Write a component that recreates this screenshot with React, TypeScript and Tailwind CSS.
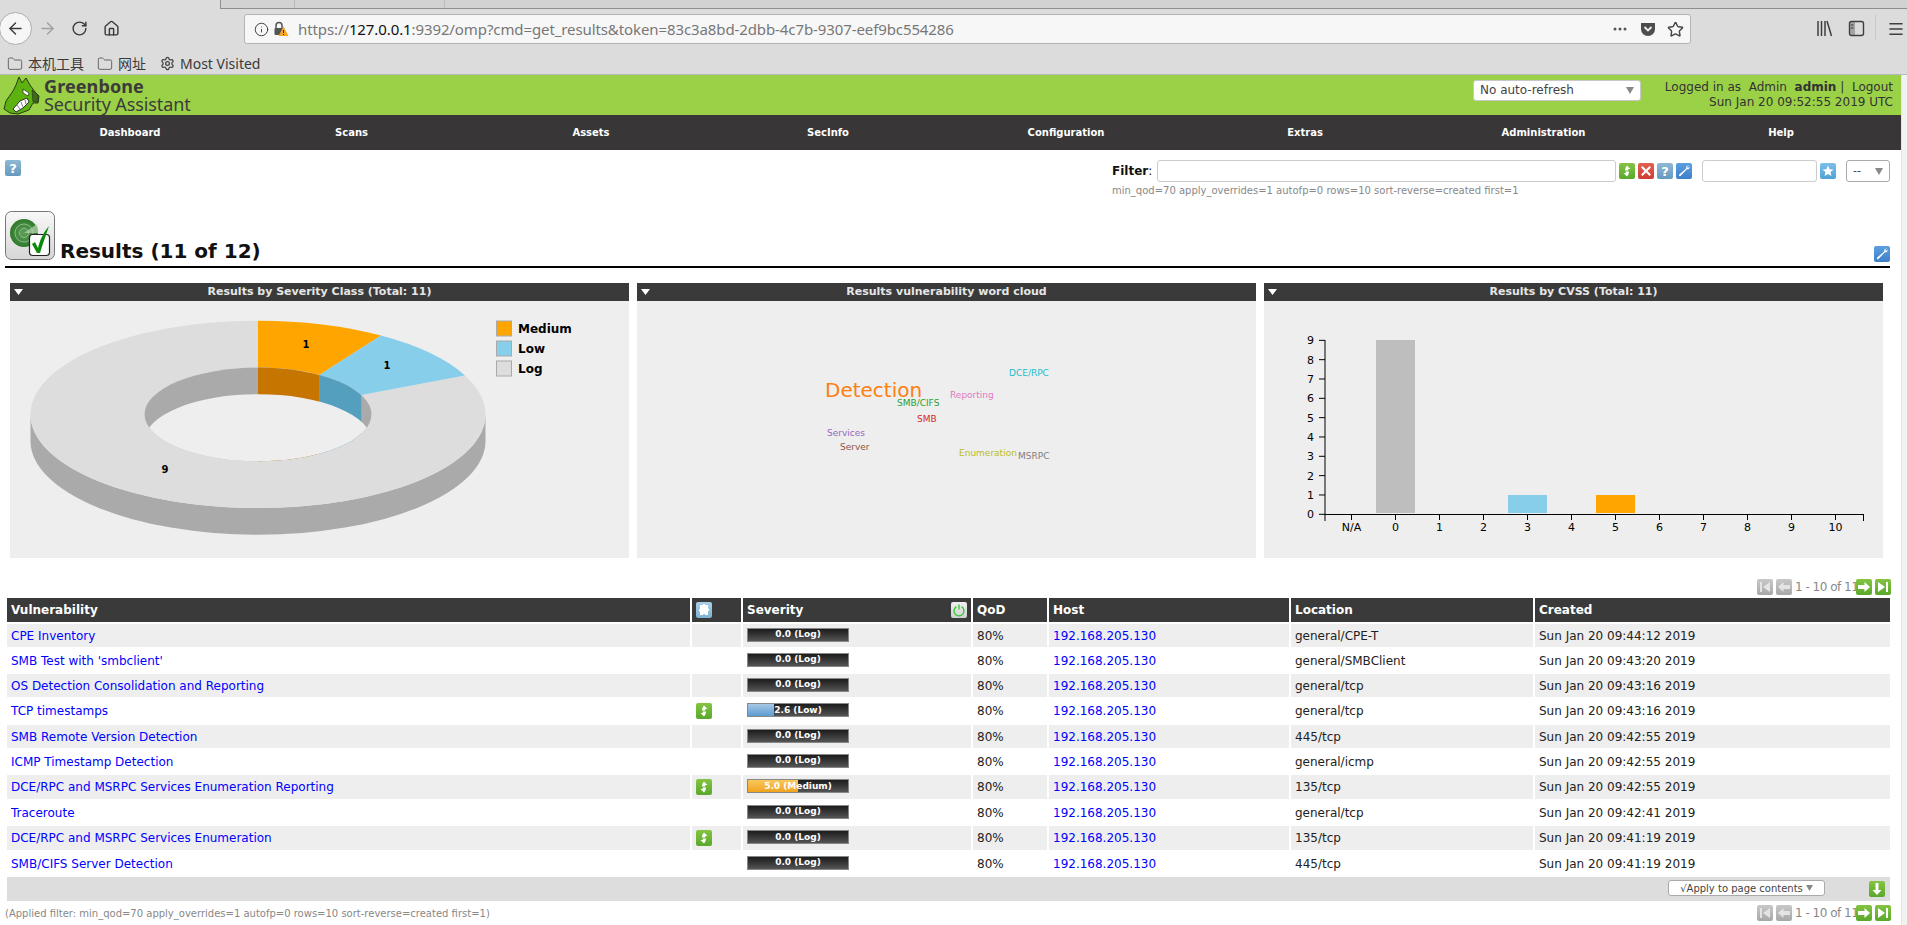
import React from "react";
import { ArrowLeft, ArrowRight, RotateCw, Home, Info, Star, Folder, Settings, Menu } from "lucide-react";

const rows = [
  { n: "CPE Inventory", o: false, s: "0.0 (Log)", f: 0, c: "", l: "general/CPE-T", d: "Sun Jan 20 09:44:12 2019" },
  { n: "SMB Test with 'smbclient'", o: false, s: "0.0 (Log)", f: 0, c: "", l: "general/SMBClient", d: "Sun Jan 20 09:43:20 2019" },
  { n: "OS Detection Consolidation and Reporting", o: false, s: "0.0 (Log)", f: 0, c: "", l: "general/tcp", d: "Sun Jan 20 09:43:16 2019" },
  { n: "TCP timestamps", o: true, s: "2.6 (Low)", f: 26, c: "low", l: "general/tcp", d: "Sun Jan 20 09:43:16 2019" },
  { n: "SMB Remote Version Detection", o: false, s: "0.0 (Log)", f: 0, c: "", l: "445/tcp", d: "Sun Jan 20 09:42:55 2019" },
  { n: "ICMP Timestamp Detection", o: false, s: "0.0 (Log)", f: 0, c: "", l: "general/icmp", d: "Sun Jan 20 09:42:55 2019" },
  { n: "DCE/RPC and MSRPC Services Enumeration Reporting", o: true, s: "5.0 (Medium)", f: 50, c: "med", l: "135/tcp", d: "Sun Jan 20 09:42:55 2019" },
  { n: "Traceroute", o: false, s: "0.0 (Log)", f: 0, c: "", l: "general/tcp", d: "Sun Jan 20 09:42:41 2019" },
  { n: "DCE/RPC and MSRPC Services Enumeration", o: true, s: "0.0 (Log)", f: 0, c: "", l: "135/tcp", d: "Sun Jan 20 09:41:19 2019" },
  { n: "SMB/CIFS Server Detection", o: false, s: "0.0 (Log)", f: 0, c: "", l: "445/tcp", d: "Sun Jan 20 09:41:19 2019" },
];

function Tile({ from, to, children, title }: { from: string; to: string; children?: React.ReactNode; title?: string }) {
  const id = "g" + from.replace("#", "") + to.replace("#", "");
  return (
    <svg width="16" height="16" viewBox="0 0 16 16" className="shrink-0 block">
      <defs>
        <linearGradient id={id} x1="0" y1="0" x2="0" y2="1">
          <stop offset="0" stopColor={from} />
          <stop offset="1" stopColor={to} />
        </linearGradient>
      </defs>
      <rect x="0" y="0" width="16" height="16" rx="2" fill={`url(#${id})`} />
      {children}
      {title ? null : null}
    </svg>
  );
}

const Refresh = () => (
  <Tile from="#84c441" to="#5aa82c">
    <path d="M8 2.5 L11.5 6 H9.3 V7.5 H6 C6 5.5 6.7 4.8 6.7 4.2 Z" fill="#fff" />
    <path d="M8 13.5 L4.5 10 H6.7 V8.5 H10 C10 10.5 9.3 11.2 9.3 11.8 Z" fill="#fff" />
  </Tile>
);
const Cross = () => (
  <Tile from="#e2604f" to="#cf3d33">
    <path d="M4.5 3 L8 6.5 L11.5 3 L13 4.5 L9.5 8 L13 11.5 L11.5 13 L8 9.5 L4.5 13 L3 11.5 L6.5 8 L3 4.5 Z" fill="#fff" />
  </Tile>
);
const Help = () => (
  <Tile from="#8fb9d2" to="#649ac0">
    <text x="8" y="13" textAnchor="middle" fontSize="13" fontWeight="700" fill="#fff">?</text>
  </Tile>
);
const Wrench = () => (
  <Tile from="#5c9fe0" to="#3d80c8">
    <path d="M13 2.5 C11 2.3 9.8 3.6 10.2 5.4 L3.2 11.6 C2.4 12.4 3.6 13.7 4.5 13 L10.9 6.2 C12.6 6.7 14 5.2 13.5 3.4 L12 5 L11 4 Z" fill="#fff" />
  </Tile>
);
const StarTile = () => (
  <Tile from="#7cc0ea" to="#4fa2d6">
    <path d="M8 2.5 L9.6 6.2 L13.5 6.5 L10.5 9.1 L11.5 13 L8 10.9 L4.5 13 L5.5 9.1 L2.5 6.5 L6.4 6.2 Z" fill="#fff" />
  </Tile>
);
const Puzzle = () => (
  <Tile from="#a9cfe6" to="#7fb2d3">
    <path d="M6 3 H7 C6.7 1.6 9.3 1.6 9 3 H12 V6.5 C13.6 6.2 13.6 9.2 12 8.9 V13 H9.2 C9.5 11.5 6.7 11.5 7 13 H4 V9.5 C2.4 9.9 2.4 6.6 4 7 V3 Z" fill="#fff" />
  </Tile>
);
const Power = () => (
  <Tile from="#f0f0f0" to="#d0d0d0">
    <path d="M5.4 4.6 A5 5 0 1 0 10.6 4.6" fill="none" stroke="#2fc52f" strokeWidth="1.3" />
    <path d="M8 2.5 V7.5" stroke="#2fc52f" strokeWidth="1.3" />
  </Tile>
);
const Down = () => (
  <Tile from="#84c441" to="#5aa82c">
    <path d="M6.5 2 H9.5 V9 H12.5 L8 14 L3.5 9 H6.5 Z" fill="#fff" />
  </Tile>
);

function Pager() {
  const gray: [string, string] = ["#c8c8c8", "#a8a8a8"];
  return (
    <div className="flex items-center gap-[3px] text-[12px] text-[#888888]">
      <Tile from={gray[0]} to={gray[1]}>
        <path d="M3 3 H5 V13 H3 Z M13 3 V13 L6 8 Z" fill="#e4e4e4" />
      </Tile>
      <Tile from={gray[0]} to={gray[1]}>
        <path d="M7.5 3 V6 H14 V10 H7.5 V13 L2 8 Z" fill="#e4e4e4" />
      </Tile>
      <span className="w-[58px] text-center tracking-[-0.5px] whitespace-nowrap">1 - 10 of 11</span>
      <Tile from="#84c441" to="#5aa82c">
        <path d="M8.5 3 V6 H2 V10 H8.5 V13 L14 8 Z" fill="#fff" />
      </Tile>
      <Tile from="#84c441" to="#5aa82c">
        <path d="M11 3 H13 V13 H11 Z M3 3 V13 L10 8 Z" fill="#fff" />
      </Tile>
    </div>
  );
}

function Panel({ title, children }: { title: string; children: React.ReactNode }) {
  return (
    <div className="w-[619px]">
      <div className="h-[18px] bg-[#3a3a3a] flex items-center relative">
        <svg width="9" height="6" viewBox="0 0 9 6" className="ml-[4px] shrink-0">
          <path d="M0 0 H9 L4.5 6 Z" fill="#fff" />
        </svg>
        <span className="flex-1 pr-[13px] text-center text-[11px] font-bold text-[#e6e6e6] whitespace-nowrap">{title}</span>
      </div>
      <div className="h-[257px] bg-[#eeeeee]">{children}</div>
    </div>
  );
}

function pt(rx: number, ry: number, deg: number) {
  const a = (deg * Math.PI) / 180;
  return [258 + rx * Math.sin(a), 414.4 - ry * Math.cos(a)];
}
function sector(a0: number, a1: number) {
  const R = 227.5, Y = 93.7, r = 113.5, y = 46.8;
  const [x0, y0] = pt(R, Y, a0), [x1, y1] = pt(R, Y, a1), [x2, y2] = pt(r, y, a1), [x3, y3] = pt(r, y, a0);
  const lg = a1 - a0 > 180 ? 1 : 0;
  return `M${x0} ${y0} A${R} ${Y} 0 ${lg} 1 ${x1} ${y1} L${x2} ${y2} A${r} ${y} 0 ${lg} 0 ${x3} ${y3} Z`;
}

function Donut() {
  const s = 360 / 11;
  return (
    <svg width="619" height="257" viewBox="10 301 619 257" className="block">
      <defs>
        <clipPath id="hole">
          <ellipse cx="258" cy="414.4" rx="113.5" ry="46.8" />
        </clipPath>
      </defs>
      <path d="M30.5 414.4 A227.5 93.7 0 0 0 485.5 414.4 V441 A227.5 93.7 0 0 1 30.5 441 Z" fill="#aaaaaa" />
      <path d={sector(2 * s, 359.999)} fill="#dddddd" />
      <path d={sector(0, s)} fill="#ffa500" />
      <path d={sector(s, 2 * s)} fill="#87ceeb" />
      <g clipPath="url(#hole)">
        <rect x="140" y="360" width="240" height="110" fill="#aaaaaa" />
        <rect x="258" y="360" width="61.4" height="110" fill="#c67500" />
        <rect x="319.4" y="360" width="41.8" height="110" fill="#559fbe" />
        <ellipse cx="258" cy="441" rx="113.5" ry="46.8" fill="#eeeeee" />
      </g>
      <g fontSize="10" fontWeight="700" fill="#000" textAnchor="middle">
        <text x="306" y="347.5">1</text>
        <text x="387" y="368.5">1</text>
        <text x="165" y="473">9</text>
      </g>
      <g stroke="#aaaaaa" strokeWidth="1">
        <rect x="496.5" y="321" width="15" height="15" fill="#ffa500" />
        <rect x="496.5" y="341" width="15" height="15" fill="#87ceeb" />
        <rect x="496.5" y="361" width="15" height="15" fill="#dddddd" />
      </g>
      <g fontSize="12" fontWeight="700" fill="#000">
        <text x="518" y="333">Medium</text>
        <text x="518" y="353">Low</text>
        <text x="518" y="373">Log</text>
      </g>
    </svg>
  );
}

const words: [string, number, number, number, string][] = [
  ["Detection", 825, 397, 20, "#ff7f0e"],
  ["SMB/CIFS", 897, 406, 9, "#2ca02c"],
  ["DCE/RPC", 1009, 376, 9, "#17becf"],
  ["Reporting", 950, 398, 9, "#e377c2"],
  ["SMB", 917, 422, 9, "#d62728"],
  ["Services", 827, 436, 9, "#9467bd"],
  ["Server", 840, 450, 9, "#8c564b"],
  ["Enumeration", 959, 456, 9, "#bcbd22"],
  ["MSRPC", 1018, 459, 9, "#7f7f7f"],
];

function Cloud() {
  return (
    <svg width="619" height="257" viewBox="637 301 619 257" className="block">
      {words.map(([t, x, y, s, c]) => (
        <text key={t} x={x} y={y} fontSize={s} fill={c}>{t}</text>
      ))}
    </svg>
  );
}

function Bars() {
  const ys = [0, 1, 2, 3, 4, 5, 6, 7, 8, 9];
  const xs = ["N/A", "0", "1", "2", "3", "4", "5", "6", "7", "8", "9", "10"];
  const y = (v: number) => 514.3 - v * 19.33;
  const x = (i: number) => 1351.5 + i * 44;
  return (
    <svg width="619" height="257" viewBox="1264 301 619 257" className="block">
      <rect x="1376" y="340" width="39" height="173" fill="#bebebe" />
      <rect x="1508" y="495" width="39" height="18" fill="#87ceeb" />
      <rect x="1596" y="495" width="39" height="18" fill="#ffa500" />
      <path d="M1325 340 V514.5 H1863.5" fill="none" stroke="#000" />
      <path d="M1325 514 V521 M1863.5 514 V521" stroke="#000" />
      {ys.map((v) => (
        <g key={v}>
          <path d={`M1319 ${y(v)} H1325`} stroke="#000" />
          <text x="1314" y={y(v) + 4} textAnchor="end" fontSize="11" fill="#000">{v}</text>
        </g>
      ))}
      {xs.map((t, i) => (
        <g key={t + i}>
          <path d={`M${x(i)} 514 V520`} stroke="#000" />
          <text x={x(i)} y="531" textAnchor="middle" fontSize="11" fill="#000">{t}</text>
        </g>
      ))}
    </svg>
  );
}

function Bar({ s, f, c }: { s: string; f: number; c: string }) {
  const fill = c === "low" ? "bg-linear-to-b from-[#a6c8e6] to-[#5c9bd1]" : "bg-linear-to-b from-[#f7c95a] to-[#f0a31a]";
  return (
    <div className="relative w-[102px] h-[14px] border border-[#888888] bg-linear-to-b from-[#1c1c1c] to-[#555555]">
      {f > 0 ? <div className={`h-full ${fill}`} style={{ width: `${f}%` }} /> : null}
      <div className="absolute inset-0 flex items-center justify-center text-[9px] font-bold text-white leading-none whitespace-nowrap">{s}</div>
    </div>
  );
}

function Dragon() {
  return (
    <svg width="38" height="40" viewBox="0 75 38 40" className="shrink-0 ml-[2px]">
      <path d="M17 77 L20 83 L24 78 L28 85 L33 92 L37 96 L36 103 L31 103 L27 110 L16 114 L8 113 L2 109 L4 101 L11 91 L14 85 Z" fill="#5cb30f" stroke="#2c3a18" strokeWidth="1" />
      <path d="M30 90 L36 95 L36 102 L31 102 Z" fill="#3e6b1a" stroke="#2c3a18" strokeWidth="0.7" />
      <path d="M21 89 L27 93 L26 96 L21 93 Z" fill="#fff" stroke="#222" strokeWidth="0.7" />
      <path d="M11 109 L18 101 L25 98 L27 102 L21 108 L14 112 Z" fill="#fff" stroke="#222" strokeWidth="0.9" />
      <path d="M15 105 L18 109 M19 102 L21 107 M23 100 L24 104" stroke="#444" strokeWidth="0.7" />
    </svg>
  );
}

function ResultsIcon() {
  return (
    <svg width="50" height="49" viewBox="0 0 50 49" className="shrink-0 block">
      <defs>
        <linearGradient id="box" x1="0" y1="0" x2="0" y2="1">
          <stop offset="0" stopColor="#f8f8f8" />
          <stop offset="1" stopColor="#d6d6d6" />
        </linearGradient>
        <radialGradient id="rad">
          <stop offset="0" stopColor="#5f9f5a" />
          <stop offset="1" stopColor="#2f7a2a" />
        </radialGradient>
      </defs>
      <rect x="0.5" y="0.5" width="49" height="48" rx="6" fill="url(#box)" stroke="#777777" />
      <circle cx="19" cy="22" r="14" fill="url(#rad)" />
      <circle cx="19" cy="22" r="9" fill="none" stroke="#9cc79a" strokeWidth="0.8" />
      <circle cx="19" cy="22" r="4.5" fill="none" stroke="#9cc79a" strokeWidth="0.8" />
      <path d="M19 22 L32 13 A14 14 0 0 1 33 22 Z" fill="#b8d4b0" opacity="0.7" />
      <rect x="24.5" y="23.5" width="20" height="21" rx="3" fill="#fff" stroke="#222" strokeWidth="1.2" />
      <path d="M27 33 L30 31 L33 37 C35 29 38 22 44 15 C41 24 38 32 35 42 H32 Z" fill="#0a8a0a" />
    </svg>
  );
}

function BrowserChrome() {
  return (
    <div className="h-[75px] bg-[#dcdcdc] border-b border-[#b8b8b8] [font-family:'Noto_Sans','Noto_Sans_CJK_SC',sans-serif] text-[#333]">
      <div className="h-[9px] flex">
        <div className="w-[220px] shrink-0" />
        <div className="flex-1 flex bg-[#d2d2d2] border-l border-b border-[#8e8e8e]">
          <div className="w-[74px] border-r border-[#bbbbbb]" />
          <div className="w-[150px] border-r border-[#bbbbbb]" />
        </div>
      </div>
      <div className="h-[44px] flex items-start">
        <div className="w-[33px] h-[33px] -ml-[1px] mt-[3px] rounded-full bg-[#f6f6f6] border border-[#adadad] flex items-center justify-center shrink-0">
          <ArrowLeft size={19} strokeWidth={1.8} color="#3a3a3a" />
        </div>
        <ArrowRight size={19} strokeWidth={1.8} color="#a0a0a0" className="ml-[6px] mt-[10px] shrink-0" />
        <RotateCw size={17} strokeWidth={2} color="#3a3a3a" className="ml-[14px] mt-[11px] shrink-0" />
        <Home size={17} strokeWidth={2} color="#3a3a3a" className="ml-[15px] mt-[11px] shrink-0" />
        <div className="ml-[124px] mt-[5px] w-[1447px] h-[30px] bg-[#f7f7f7] border border-[#b4b4b4] rounded-[3px] flex items-center shrink-0 text-[15px] leading-none">
          <Info size={15} strokeWidth={1.6} color="#444" className="ml-[9px] shrink-0" />
          <svg width="16" height="16" viewBox="0 0 16 16" className="ml-[4px] shrink-0">
            <path d="M3 7 V4.5 A3 3 0 0 1 9 4.5 V7" fill="none" stroke="#555" strokeWidth="1.5" />
            <rect x="1.5" y="7" width="9" height="7" rx="1" fill="#555" />
            <path d="M10.5 5.5 L15.5 15 H5.5 Z" fill="#f5a623" />
            <path d="M10.5 9 V12 M10.5 13 V14" stroke="#333" strokeWidth="1" />
          </svg>
          <span className="ml-[9px] whitespace-nowrap tracking-[-0.1px] text-[#777]">
            https://<span className="text-[#111]">127.0.0.1</span>:9392/omp?cmd=get_results&amp;token=83c3a8bd-2dbb-4c7b-9307-eef9bc554286
          </span>
          <div className="ml-auto flex items-center gap-[2px] pr-[6px]">
            <svg width="14" height="4" viewBox="0 0 14 4" className="mr-[11px]">
              <circle cx="2" cy="2" r="1.5" fill="#555" /><circle cx="7" cy="2" r="1.5" fill="#555" /><circle cx="12" cy="2" r="1.5" fill="#555" />
            </svg>
            <svg width="16" height="16" viewBox="0 0 16 16" className="mr-[9px]">
              <path d="M1 2 H15 V8 A7 7 0 0 1 1 8 Z" fill="#4d4d4d" />
              <path d="M4.5 6 L8 9.5 L11.5 6" fill="none" stroke="#f0f0f0" strokeWidth="1.8" />
            </svg>
            <Star size={17} strokeWidth={2} color="#444" />
          </div>
        </div>
        <svg width="17" height="17" viewBox="0 0 17 17" className="ml-[125px] mt-[11px] shrink-0">
          <path d="M2 1 V16 M5.5 1 V16 M9 1 V16 M11 1 L15.5 16" stroke="#3f3f3f" strokeWidth="1.5" fill="none" />
        </svg>
        <svg width="17" height="17" viewBox="0 0 17 17" className="ml-[15px] mt-[11px] shrink-0">
          <rect x="1.5" y="1.5" width="14" height="14" rx="2" fill="none" stroke="#3f3f3f" strokeWidth="1.4" />
          <rect x="1.5" y="1.5" width="5.5" height="14" fill="#3f3f3f" opacity="0.35" />
          <path d="M3 5 H5.5 M3 8 H5.5" stroke="#333" />
        </svg>
        <div className="ml-[10px] mt-[6px] w-px h-[25px] bg-[#c8c8c8] shrink-0" />
        <Menu size={18} strokeWidth={2.2} color="#3f3f3f" className="ml-[11px] mt-[11px] shrink-0" />
      </div>
      <div className="h-[21px] flex items-center text-[14px] leading-none text-[#3a3a3a]">
        <Folder size={16} strokeWidth={1.3} color="#555" className="ml-[7px] shrink-0" />
        <span className="ml-[5px]">本机工具</span>
        <Folder size={16} strokeWidth={1.3} color="#555" className="ml-[13px] shrink-0" />
        <span className="ml-[5px]">网址</span>
        <Settings size={15} strokeWidth={2} color="#444" className="ml-[14px] shrink-0" />
        <span className="ml-[5px]">Most Visited</span>
      </div>
    </div>
  );
}

const navItems: [string, string][] = [
  ["Dashboard", "w-[260px]"], ["Scans", "w-[183px]"], ["Assets", "w-[296px]"], ["SecInfo", "w-[178px]"],
  ["Configuration", "w-[298px]"], ["Extras", "w-[180px]"], ["Administration", "w-[297px]"], ["Help", "w-[178px]"],
];

export default function App() {
  const thc = "bg-[#3a3a3a] text-white text-[12px] font-bold text-left px-[4px] p-0";
  return (
    <div className="w-[1907px] h-[925px] overflow-hidden bg-white flex flex-col [font-family:'DejaVu_Sans',sans-serif] text-[12px] text-[#222]">
      <BrowserChrome />
      <div className="flex flex-1 min-h-0">
        <div className="w-[1901px] shrink-0 flex flex-col">
          <div className="h-[40px] bg-[#9bd147] flex items-center shrink-0">
            <Dragon />
            <div className="ml-[4px] flex flex-col [font-family:'Noto_Sans',sans-serif] text-[#3b3b3b] leading-[18px]">
              <span className="text-[18px] font-bold tracking-[0.1px]">Greenbone</span>
              <span className="text-[18px] tracking-[-0.1px]">Security Assistant</span>
            </div>
            <div className="ml-auto w-[168px] h-[21px] mb-[10px] bg-white border border-[#c8c8c8] rounded-[3px] flex items-center pl-[6px] pr-[6px] text-[12px] text-[#444]">
              <span className="whitespace-nowrap">No auto-refresh</span>
              <svg width="8" height="7" viewBox="0 0 8 7" className="ml-auto"><path d="M0 0 H8 L4 7 Z" fill="#888" /></svg>
            </div>
            <div className="ml-[20px] w-[232px] mr-[8px] text-right text-[12px] text-[#333] leading-[15px] whitespace-nowrap">
              <div>Logged in as&nbsp; Admin&nbsp; <b>admin</b> |&nbsp; Logout</div>
              <div>Sun Jan 20 09:52:55 2019 UTC</div>
            </div>
          </div>
          <div className="h-[35px] bg-[#393637] flex items-center shrink-0">
            {navItems.map(([t, w]) => (
              <div key={t} className={`${w} text-center text-[10px] font-bold text-white`}>{t}</div>
            ))}
          </div>
          <div className="h-[61px] pt-[10px] flex shrink-0">
            <div className="ml-[5px]"><Help /></div>
            <div className="ml-auto w-[789px] flex flex-col">
              <div className="flex items-center h-[22px]">
                <span className="w-[45px] text-[12px] text-[#111]"><b>Filter</b>:</span>
                <input className="w-[459px] h-[22px] bg-white border border-[#cccccc] rounded-[3px]" readOnly />
                <div className="ml-[3px] flex gap-[3px]"><Refresh /><Cross /><Help /><Wrench /></div>
                <input className="ml-[10px] w-[115px] h-[22px] bg-white border border-[#cccccc] rounded-[3px]" readOnly />
                <div className="ml-[3px]"><StarTile /></div>
                <div className="ml-[10px] w-[44px] h-[22px] border border-[#aaaaaa] rounded-[3px] flex items-center px-[6px] text-[11px] text-[#333]">
                  <span>--</span>
                  <svg width="8" height="7" viewBox="0 0 8 7" className="ml-auto"><path d="M0 0 H8 L4 7 Z" fill="#888" /></svg>
                </div>
              </div>
              <div className="mt-[1px] text-[10px] text-[#888888] whitespace-nowrap">min_qod=70 apply_overrides=1 autofp=0 rows=10 sort-reverse=created first=1</div>
            </div>
          </div>
          <div className="ml-[5px] w-[1885px] h-[57px] border-b-2 border-black flex items-end pb-[6px] shrink-0">
            <ResultsIcon />
            <span className="ml-[5px] text-[20px] leading-[22px] font-bold text-[#111] -mb-[2px] whitespace-nowrap">Results (11 of 12)</span>
            <div className="ml-auto mb-[-2px]"><Wrench /></div>
          </div>
          <div className="ml-[10px] mt-[15px] flex gap-[8px] shrink-0">
            <Panel title="Results by Severity Class (Total: 11)"><Donut /></Panel>
            <Panel title="Results vulnerability word cloud"><Cloud /></Panel>
            <Panel title="Results by CVSS (Total: 11)"><Bars /></Panel>
          </div>
          <div className="mt-[20px] pr-[10px] flex justify-end shrink-0"><Pager /></div>
          <table className="ml-[5px] w-[1887px] table-fixed border-separate border-spacing-[2px] shrink-0">
            <colgroup>
              <col className="w-[683px]" /><col className="w-[49px]" /><col className="w-[228px]" /><col className="w-[74px]" />
              <col className="w-[240px]" /><col className="w-[242px]" /><col className="w-[355px]" />
            </colgroup>
            <thead>
              <tr className="h-[24px]">
                <th className={thc}>Vulnerability</th>
                <th className={thc}><Puzzle /></th>
                <th className={thc}>
                  <div className="flex items-center justify-between">Severity<Power /></div>
                </th>
                <th className={thc}>QoD</th>
                <th className={thc}>Host</th>
                <th className={thc}>Location</th>
                <th className={thc}>Created</th>
              </tr>
            </thead>
            <tbody>
              {rows.map((r, i) => (
                <tr key={i} className={`${r.o ? "h-[24px]" : "h-[23px]"} ${i % 2 === 0 ? "bg-[#eeeeee]" : "bg-white"}`}>
                  <td className="px-[4px] p-0 leading-none text-[#0000ff]">{r.n}</td>
                  <td className="px-[4px] p-0">{r.o ? <Refresh /> : null}</td>
                  <td className="px-[4px] p-0"><div className="-mt-[2px]"><Bar s={r.s} f={r.f} c={r.c} /></div></td>
                  <td className="px-[4px] p-0 leading-none">80%</td>
                  <td className="px-[4px] p-0 leading-none text-[#0000ff]">192.168.205.130</td>
                  <td className="px-[4px] p-0 leading-none">{r.l}</td>
                  <td className="px-[4px] p-0 leading-none">{r.d}</td>
                </tr>
              ))}
              <tr className="h-[24px] bg-[#dddddd]">
                <td colSpan={7} className="p-0">
                  <div className="flex items-center justify-end pr-[5px]">
                    <div className="w-[157px] h-[16px] mb-[2px] bg-white border border-[#aaaaaa] rounded-[3px] flex items-center justify-center gap-[3px] text-[10px] text-[#444] whitespace-nowrap">
                      √Apply to page contents
                      <svg width="7" height="6" viewBox="0 0 7 6"><path d="M0 0 H7 L3.5 6 Z" fill="#888" /></svg>
                    </div>
                    <div className="ml-[44px]"><Down /></div>
                  </div>
                </td>
              </tr>
            </tbody>
          </table>
          <div className="mt-[1px] ml-[5px] pr-[10px] flex items-center justify-between shrink-0">
            <span className="text-[10px] text-[#888888] whitespace-nowrap">(Applied filter: min_qod=70 apply_overrides=1 autofp=0 rows=10 sort-reverse=created first=1)</span>
            <Pager />
          </div>
        </div>
        <div className="w-[6px] bg-[#f2f2f2] border-l border-[#e4e4e4]" />
      </div>
    </div>
  );
}
